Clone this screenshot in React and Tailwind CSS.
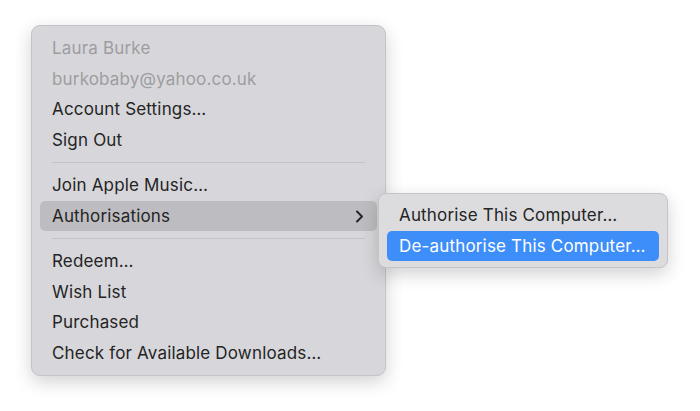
import React from 'react';

const font = { fontFamily: 'Inter, "Noto Sans", sans-serif' };

const Row = ({ children, disabled, active, chevron }) => (
    <div
        className={`mx-2 h-[30.5px] flex items-center justify-between pl-3 pr-3 pt-px rounded-[5px] ${
            active ? 'bg-[#bdbdc1]' : ''
        } ${disabled ? 'text-[#9d9da1]' : 'text-[#242424]'}`}
    >
        <span>{children}</span>
        {chevron && (
            <svg width="9" height="13" viewBox="0 0 9 13" className="mr-[1px]">
                <path d="M2 1.5 L7 6.5 L2 11.5" fill="none" stroke="#262626" strokeWidth="2" strokeLinecap="round" strokeLinejoin="round" />
            </svg>
        )}
    </div>
);

const Separator = () => (
    <div className="h-[15px] flex items-center px-5">
        <div className="w-full h-px bg-[#c3c3c7]" />
    </div>
);

export default function App() {
    return (
        <div className="w-[700px] h-[411px] bg-white overflow-hidden" style={font}>
            <div className="pt-[25px] pl-[31px]">
                <div className="relative w-[355px] bg-[#d7d7db] rounded-[9px] border border-[#c4c4c8] shadow-[0_6px_18px_rgba(0,0,0,0.18)] py-[7px] text-[17px] tracking-[0.17px]">
                    <Row disabled>Laura Burke</Row>
                    <Row disabled>burkobaby@yahoo.co.uk</Row>
                    <Row>Account Settings…</Row>
                    <Row>Sign Out</Row>
                    <Separator />
                    <Row>Join Apple Music…</Row>
                    <Row active chevron>Authorisations</Row>
                    <Separator />
                    <Row>Redeem…</Row>
                    <Row>Wish List</Row>
                    <Row>Purchased</Row>
                    <Row>Check for Available Downloads…</Row>

                    {/* Submenu */}
                    <div className="absolute left-[346px] top-[167px] w-[290px] bg-[#dcdcdf] rounded-[8px] border border-[#c4c4c8] shadow-[0_6px_18px_rgba(0,0,0,0.18)] py-[6px]">
                        <div className="mx-2 h-[30.5px] flex items-center px-3 pt-px text-[#242424]">
                            Authorise This Computer…
                        </div>
                        <div className="mx-2 h-[30.5px] flex items-center px-3 pt-px rounded-[5px] bg-[#3d8ef8] text-white">
                            De-authorise This Computer…
                        </div>
                    </div>
                </div>
            </div>
        </div>
    );
}
